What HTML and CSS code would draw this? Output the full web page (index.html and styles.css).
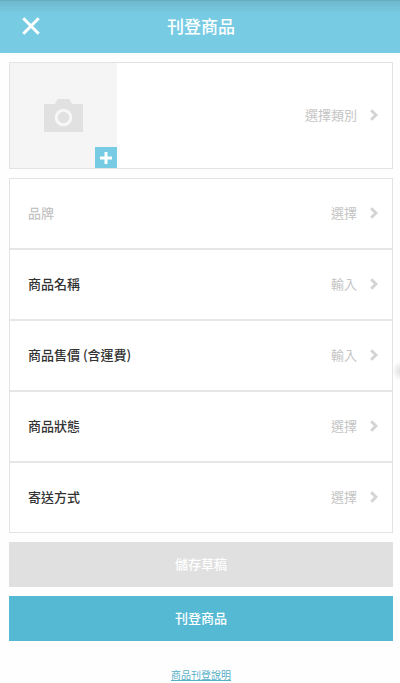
FILE: index.html
```html
<!DOCTYPE html>
<html lang="zh-Hant">
<head>
<meta charset="utf-8">
<meta name="viewport" content="width=device-width, initial-scale=1">
<title>刊登商品</title>
<link rel="stylesheet" href="styles.css">
</head>
<body>
<svg class="defs" width="0" height="0" aria-hidden="true">
  <symbol id="chevron" viewBox="0 0 8 12"><path d="M1.2 1.2 6 6 1.2 10.8" fill="none" stroke="currentColor" stroke-width="3"/></symbol>
</svg>
<header class="topbar">
  <button class="close" type="button" aria-label="關閉">
    <svg width="18" height="18" viewBox="0 0 18 18"><path d="M1.3 1.3 16.7 16.7M16.7 1.3 1.3 16.7" fill="none" stroke="currentColor" stroke-width="3"/></svg>
  </button>
  <h1 class="title">刊登商品</h1>
</header>
<main class="content">
  <section class="card media">
    <button class="photo" type="button" aria-label="新增照片">
      <svg width="39" height="33" viewBox="0 0 39 33"><path d="M0 5H11L13.5 0H25.5L28 5H39V33H0Z" fill="#e1e1e1"/><circle cx="19.5" cy="18.5" r="7.3" fill="none" stroke="#f7f7f7" stroke-width="3"/></svg>
      <span class="plus"><svg width="12" height="12" viewBox="0 0 12 12"><path d="M6 0V12M0 6H12" fill="none" stroke="currentColor" stroke-width="3"/></svg></span>
    </button>
    <button class="row category" type="button"><span class="value">選擇類別</span><svg class="chevron"><use href="#chevron"/></svg></button>
  </section>
  <section class="card">
    <button class="row" type="button"><span class="label muted">品牌</span><span class="value">選擇</span><svg class="chevron"><use href="#chevron"/></svg></button>
    <button class="row" type="button"><span class="label">商品名稱</span><span class="value">輸入</span><svg class="chevron"><use href="#chevron"/></svg></button>
    <button class="row" type="button"><span class="label">商品售價 (含運費)</span><span class="value">輸入</span><svg class="chevron"><use href="#chevron"/></svg></button>
    <button class="row" type="button"><span class="label">商品狀態</span><span class="value">選擇</span><svg class="chevron"><use href="#chevron"/></svg></button>
    <button class="row" type="button"><span class="label">寄送方式</span><span class="value">選擇</span><svg class="chevron"><use href="#chevron"/></svg></button>
  </section>
  <button class="action draft" type="button">儲存草稿</button>
  <button class="action publish" type="button">刊登商品</button>
  <a class="help" href="#help">商品刊登說明</a>
</main>
<span class="edge-handle"></span>
</body>
</html>
```
FILE: styles.css
```css
* {
  box-sizing: border-box;
}

body {
  margin: 0;
  background: #fefefe;
  color: #333;
  font: 500 13px/20px "Noto Sans CJK TC", sans-serif;
}

button {
  margin: 0;
  padding: 0;
  border: 0;
  background: none;
  color: inherit;
  font: inherit;
  cursor: pointer;
}

svg {
  display: block;
}

.defs {
  position: absolute;
}

.topbar {
  display: grid;
  grid-template-columns: 62px 1fr 60px;
  align-items: center;
  height: 53px;
  padding-bottom: 2px;
  border-top: 1px solid #65acc0;
  background: linear-gradient(#6fb8cd, #77cce3 13px);
  color: #fff;
}

.close {
  display: grid;
  place-items: center;
  height: 50px;
}

.title {
  margin: 0;
  font-size: 17px;
  font-weight: 500;
  line-height: 24px;
  text-align: center;
}

.content {
  display: flex;
  flex-direction: column;
  gap: 9px;
  padding: 9px 7px 0 9px;
}

.card {
  border: 1px solid #e3e3e3;
  background: #fff;
}

.media {
  display: flex;
  height: 107px;
}

.photo {
  position: relative;
  display: grid;
  place-items: center;
  width: 107px;
  background: #f5f5f5;
}

.plus {
  position: absolute;
  right: 0;
  bottom: 0;
  display: grid;
  place-items: center;
  width: 22px;
  height: 21px;
  background: #77cce3;
  color: #fff;
}

.row {
  display: flex;
  align-items: center;
  width: 100%;
  height: 71px;
  padding: 0 14px 2px 18px;
}

.row + .row {
  border-top: 2px solid #e6e6e6;
}

.row:first-child {
  height: 69px;
}

.row.category {
  flex: 1;
  height: auto;
}

.muted {
  color: #c4c4c4;
}

.value {
  margin-left: auto;
  color: #c4c4c4;
  font-weight: 400;
}

.chevron {
  width: 8px;
  height: 12px;
  margin-left: 13px;
  color: #d4d4d4;
}

.action {
  height: 45px;
  padding-bottom: 2px;
  color: #fff;
}

.draft {
  background: #e0e0e0;
}

.publish {
  background: #55b9d4;
}

.help {
  align-self: center;
  margin-top: 15px;
  color: #55b0c8;
  font-size: 10px;
  font-weight: 400;
}

.edge-handle {
  position: absolute;
  top: 361px;
  right: 0;
  width: 8px;
  height: 20px;
  background: radial-gradient(ellipse at right, #e0e0e0, transparent 70%);
}
```
